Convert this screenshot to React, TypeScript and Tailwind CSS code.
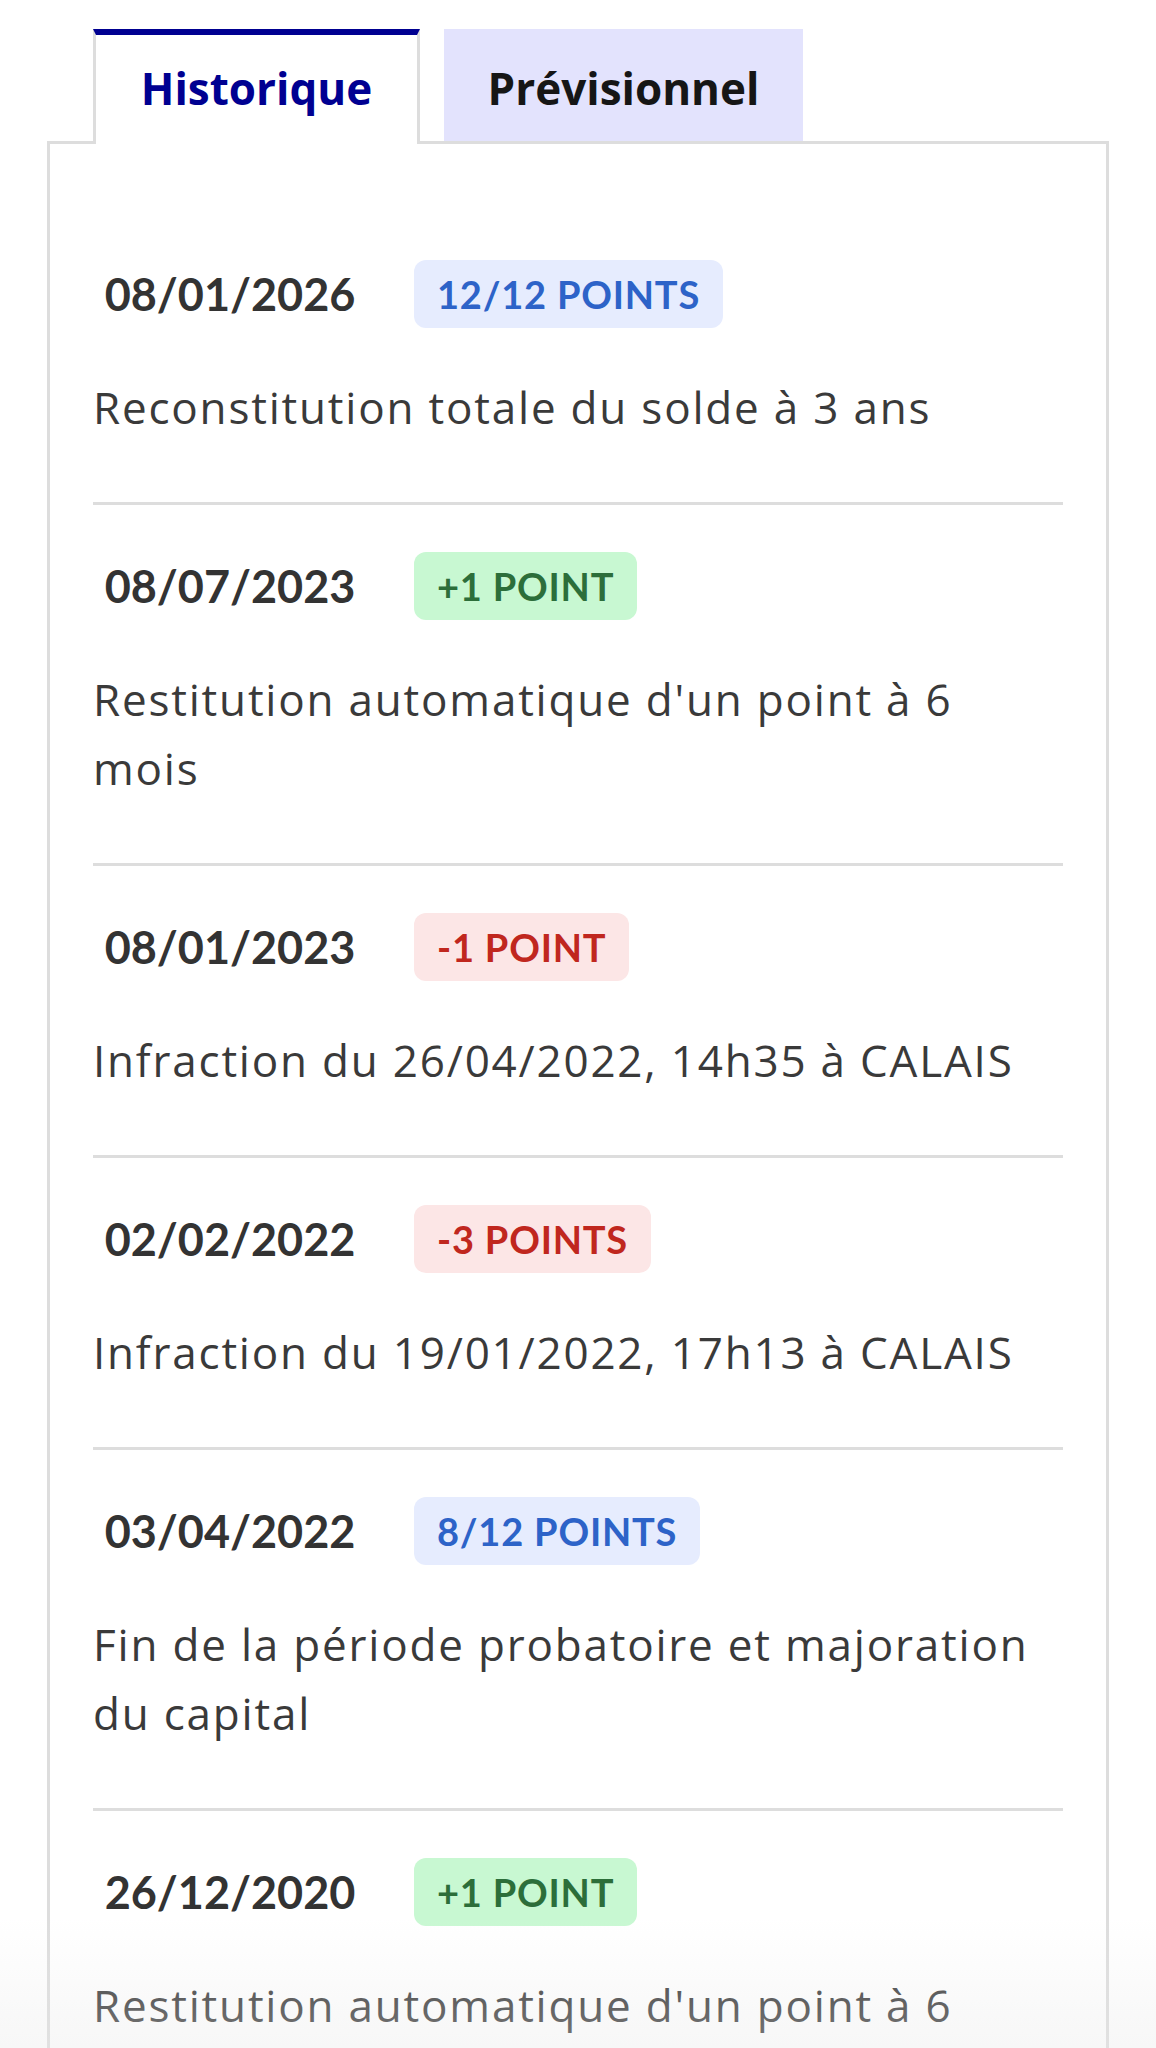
import React from "react"

type Tone = "blue" | "green" | "red"

type Entry = {
  date: string
  badge: string
  tone: Tone
  lines: string[]
}

const entries: Entry[] = [
  { date: "08/01/2026", badge: "12/12 points", tone: "blue", lines: ["Reconstitution totale du solde à 3 ans"] },
  { date: "08/07/2023", badge: "+1 point", tone: "green", lines: ["Restitution automatique d'un point à 6", "mois"] },
  { date: "08/01/2023", badge: "-1 point", tone: "red", lines: ["Infraction du 26/04/2022, 14h35 à CALAIS"] },
  { date: "02/02/2022", badge: "-3 points", tone: "red", lines: ["Infraction du 19/01/2022, 17h13 à CALAIS"] },
  { date: "03/04/2022", badge: "8/12 points", tone: "blue", lines: ["Fin de la période probatoire et majoration", "du capital"] },
  { date: "26/12/2020", badge: "+1 point", tone: "green", lines: ["Restitution automatique d'un point à 6", "mois"] },
]

const toneClass: Record<Tone, string> = {
  blue: "bg-[#e6ecfe] text-[#2d63c8]",
  green: "bg-[#c8f8d2] text-[#2c6e3a]",
  red: "bg-[#fce6e6] text-[#c0271e]",
}

function Badge({ label, tone }: { label: string; tone: Tone }) {
  return (
    <span
      className={`ml-[47px] flex h-[68px] items-center rounded-[12px] px-[23px] font-['Lato',sans-serif] text-[38px] font-bold uppercase tracking-[0.8px] ${toneClass[tone]}`}
    >
      {label}
    </span>
  )
}

function HistoryItem({ entry, last }: { entry: Entry; last: boolean }) {
  return (
    <div className={`pt-[47px] pb-[60px] ${last ? "" : "border-b-[3px] border-[#dddddd]"}`}>
      <div className="flex h-[68px] items-center">
        <span className="w-[274px] text-center font-['Lato',sans-serif] text-[45px] font-bold leading-none text-[#333333]">
          {entry.date}
        </span>
        <Badge label={entry.badge} tone={entry.tone} />
      </div>
      <p className="mt-[45px] text-[44px] leading-[69px] tracking-[1.8px] text-[#3a3a3a]">
        {entry.lines.map((line, i) => (
          <span key={i} className="block whitespace-nowrap">
            {line}
          </span>
        ))}
      </p>
    </div>
  )
}

export default function App() {
  return (
    <div className="relative h-[2048px] overflow-hidden bg-white font-['Open_Sans','Noto_Sans',sans-serif]">
      <div className="px-[47px] pt-[29px]">
        <div className="flex items-end gap-[24px] pl-[46px]">
          <button className="relative z-10 -mb-[3px] flex h-[115px] w-[327px] items-center justify-center border-x-[3px] border-t-[6px] border-x-[#dddddd] border-t-[#000091] bg-white pb-[3px] text-[44px] font-bold text-[#000091]">
            Historique
          </button>
          <button className="flex h-[112px] w-[359px] items-center justify-center bg-[#e3e3fd] pt-[6px] text-[44px] font-bold text-[#161616]">
            Prévisionnel
          </button>
        </div>
        <div className="border-[3px] border-[#dddddd] px-[43px] pt-[69px]">
          {entries.map((e, i) => (
            <HistoryItem key={i} entry={e} last={i === entries.length - 1} />
          ))}
        </div>
      </div>
      <div className="pointer-events-none absolute inset-x-0 bottom-0 h-[130px] bg-linear-to-b from-white/0 to-[#e8e8e8]/35" />
    </div>
  )
}
